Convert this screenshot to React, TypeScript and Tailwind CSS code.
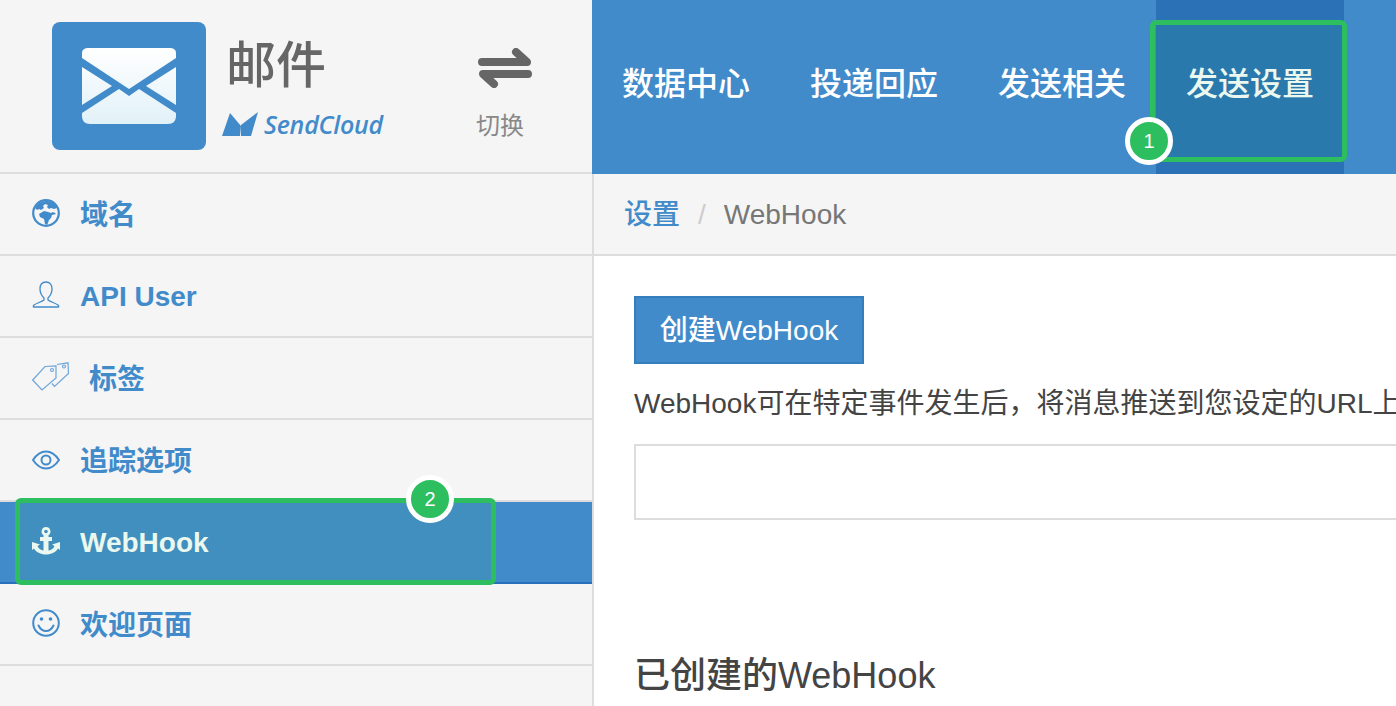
const font = "font-['Liberation_Sans','Noto_Sans_CJK_SC',sans-serif]";

const GlobeIcon = () => (
  <svg width="28" height="28" viewBox="0 0 28 28" fill="#428bca">
    <circle cx="14" cy="14" r="12.800" fill="none" stroke="#428bca" strokeWidth="2.200" />
    <path d="M3 9C5 5 9 2 14 2c5 0 9 2 11 7l-3 1-3-1-2 1-2-2 1-2-3-1-2 2 1 2-3 2-2-1-2 1z" />
    <path d="M7 15l5-3 4 1 3 1 2-1 2 1 1 1-4 1-1 3-2 2-1 3-1 2-2-1-1-5-4-2z" />
  </svg>
);

const UserIcon = () => (
  <svg width="28" height="28" viewBox="0 0 28 28" fill="none" stroke="#428bca" strokeWidth="1.300">
    <path d="M14 1c-4 0-6 3-6 7 0 4 2 7 4 9v2c-3 2-7 3-10 5-1 1-1 2 0 2h24c1 0 1-1 0-2-3-2-7-3-10-5v-2c2-2 4-5 4-9 0-4-2-7-6-7z" />
  </svg>
);

const TagsIcon = () => (
  <svg width="38" height="30" viewBox="0 0 38 30" fill="none" stroke="#6ea6d8" strokeWidth="1.200">
    <path d="M.7 18 13 4.500l11-.5v12L10 28z" />
    <circle cx="20" cy="8" r="1.500" />
    <path d="M25 2.500 36 .8l.5 10.700-14 13-2.500-3" />
    <circle cx="32" cy="4.500" r="1.500" />
  </svg>
);

const EyeIcon = () => (
  <svg width="28" height="20" viewBox="0 0 28 20" fill="none" stroke="#428bca">
    <path d="M1 10C5 4 9 1.500 14 1.500S23 4 27 10c-4 6-8 8.500-13 8.500S5 16 1 10z" strokeWidth="2" />
    <circle cx="14" cy="10" r="4.500" strokeWidth="2" />
  </svg>
);

const AnchorIcon = () => (
  <svg width="28" height="28" viewBox="0 0 28 28" fill="#ffffff">
    <path d="M14 0a4.500 4.500 0 0 1 2.500 8.200V10H20v4h-3.500v9.500c3-.5 5-2 6-4.500L20 17.500 28 15v8l-2-1.500C24 25 19.500 27.500 14 27.500S4 25 2 21.500L0 23v-8l8 2.500L5.500 19c1 2.500 3 4 6 4.500V14H8v-4h3.500V8.200A4.500 4.500 0 0 1 14 0zm0 2.700a1.800 1.800 0 1 0 0 3.600 1.800 1.800 0 0 0 0-3.600z" fillRule="evenodd" />
  </svg>
);

const SmileIcon = () => (
  <svg width="28" height="28" viewBox="0 0 28 28" fill="none" stroke="#428bca" strokeWidth="2">
    <circle cx="14" cy="14" r="12.800" />
    <circle cx="9.500" cy="10" r="1.800" fill="#428bca" stroke="none" />
    <circle cx="18.500" cy="10" r="1.800" fill="#428bca" stroke="none" />
    <path d="M6.500 16.500c2 4 4.500 5.500 7.500 5.500s5.500-1.500 7.500-5.500" strokeLinecap="round" />
  </svg>
);

const MailLogo = () => (
  <div className="flex h-[128px] w-[154px] items-center justify-center rounded-lg bg-[#428bca]">
    <svg width="94" height="76" viewBox="0 0 94 76">
      <defs>
        <linearGradient id="mail" gradientUnits="userSpaceOnUse" x1="0" y1="0" x2="0" y2="76">
          <stop offset="0" stopColor="#ffffff" />
          <stop offset="1" stopColor="#e1f1f8" />
        </linearGradient>
      </defs>
      <path d="M7 0h80c5 0 7 2 7 5v5L47 41 0 10V5c0-3 2-5 7-5z" fill="url(#mail)" />
      <path d="M0 19l30 19L0 57zM94 19 64 38l30 19z" fill="url(#mail)" />
      <path d="M37 41l10 7 10-7 37 24v3c0 5-3 8-8 8H8c-5 0-8-3-8-8v-3z" fill="url(#mail)" />
    </svg>
  </div>
);

const SendCloudMark = () => (
  <svg width="36" height="24" viewBox="0 0 36 24" fill="#428bca">
    <path d="M0 24 8 1l11 13-1 10z" />
    <path d="M19 13 36 0l-7 24H19z" />
  </svg>
);

const SwapIcon = () => (
  <svg width="54" height="40" viewBox="0 0 54 40" fill="none" stroke="#666666" strokeWidth="8" strokeLinecap="round" strokeLinejoin="round">
    <path d="M4 14h45L38 4" />
    <path d="M50 26H5l11 10" />
  </svg>
);

const navItems = ["数据中心", "投递回应", "发送相关"];

const sideItems = [
  { label: "域名", icon: <GlobeIcon /> },
  { label: "API User", icon: <UserIcon />, latin: true },
  { label: "标签", icon: <TagsIcon />, wide: true },
  { label: "追踪选项", icon: <EyeIcon />, eye: true },
  { label: "WebHook", icon: <AnchorIcon />, active: true, latin: true },
  { label: "欢迎页面", icon: <SmileIcon /> },
];

const Badge = ({ n, className }: { n: number; className: string }) => (
  <span
    className={`absolute flex h-[48px] w-[48px] items-center justify-center rounded-full border-[5px] border-white bg-[#2dbe60] text-[20px] text-white ${className}`}
  >
    {n}
  </span>
);

export default function App() {
  return (
    <div className={`${font} flex h-[706px] w-[1396px] overflow-hidden bg-white`}>
      {/* --- Sidebar --- */}
      <aside className="relative h-full w-[594px] shrink-0 border-r-2 border-[#dddddd] bg-[#f5f5f5]">
        <div className="flex h-[174px] border-b-2 border-[#dddddd] pl-[52px] pt-[22px]">
          <MailLogo />
          <div className="ml-[16px] flex w-[172px] flex-col">
            <span className="ml-[4px] mt-[14px] text-[50px] font-medium leading-[60px] text-[#666666]">邮件</span>
            <div className="mt-[13px] flex items-center gap-[6px]">
              <SendCloudMark />
              <span className="font-['Open_Sans'] text-[25px] font-semibold italic leading-[30px] tracking-[-0.25px] text-[#428bca]">SendCloud</span>
            </div>
          </div>
          <div className="ml-[82px] flex flex-col items-center pt-[26px]">
            <SwapIcon />
            <span className="mr-[10px] mt-[22px] text-[24px] leading-[32px] text-[#888888]">切换</span>
          </div>
        </div>
        {sideItems.map((item) => (
          <div
            key={item.label}
            className={`flex h-[82px] items-center border-b-2 pl-[32px] text-[28px] font-bold ${
              item.active
                ? "border-[#2a6fbd] bg-[#428bca] text-white"
                : "border-[#dddddd] text-[#428bca]"
            }`}
          >
            <span className={`flex items-center ${item.wide ? "w-[57px]" : "w-[48px]"} ${item.eye ? "" : "mb-[2px]"}`}>
              {item.icon}
            </span>
            <span className={item.latin ? "mt-[1px]" : "mt-[3px]"}>{item.label}</span>
          </div>
        ))}
        {/* Highlight box */}
        <div className="absolute left-[15px] top-[498px] h-[87px] w-[481px] rounded-[6px] border-[5px] border-[#2dbe60] bg-[#2dbe60]/10" />
        <Badge n={2} className="left-[406px] top-[475px]" />
      </aside>

      {/* --- Main --- */}
      <div className="flex min-w-0 flex-1 flex-col">
        <nav className="relative -ml-[2px] flex h-[174px] bg-[#428bca] text-[32px] font-medium text-white">
          {navItems.map((label, i) => (
            <span key={label} className={`flex items-center pb-[6px] ${i === 0 ? "ml-[30px]" : "ml-[60px]"}`}>
              {label}
            </span>
          ))}
          <div className="ml-[30px] flex w-[188px] items-center justify-center bg-[#2a72b5] pb-[6px]">
            发送设置
          </div>
          <div className="absolute left-[558px] top-[20px] h-[142px] w-[197px] rounded-[6px] border-[5px] border-[#2dbe60] bg-[#2dbe60]/10" />
          <Badge n={1} className="left-[533px] top-[117px]" />
        </nav>

        <div className="flex h-[82px] items-center border-b-2 border-[#dddddd] bg-[#f5f5f5] pl-[30px] pt-[2px] text-[28px]">
          <span className="font-medium text-[#428bca]">设置</span>
          <span className="mx-[18px] text-[#cccccc]">/</span>
          <span className="text-[#777777]">WebHook</span>
        </div>

        <div className="pl-[40px] pt-[40px] text-[#444444]">
          <button className="h-[68px] w-[230px] border-2 border-[#357ebd] bg-[#428bca] pt-[2px] text-[28px] font-medium text-white">
            创建WebHook
          </button>
          <p className="mt-[20px] whitespace-nowrap text-[28px] leading-[40px]">
            WebHook可在特定事件发生后，将消息推送到您设定的URL上
          </p>
          <div className="mt-[20px] h-[76px] border-2 border-r-0 border-[#dddddd]" />
          <h2 className="mt-[132px] text-[36px] font-medium leading-[48px]">已创建的WebHook</h2>
        </div>
      </div>
    </div>
  );
}
